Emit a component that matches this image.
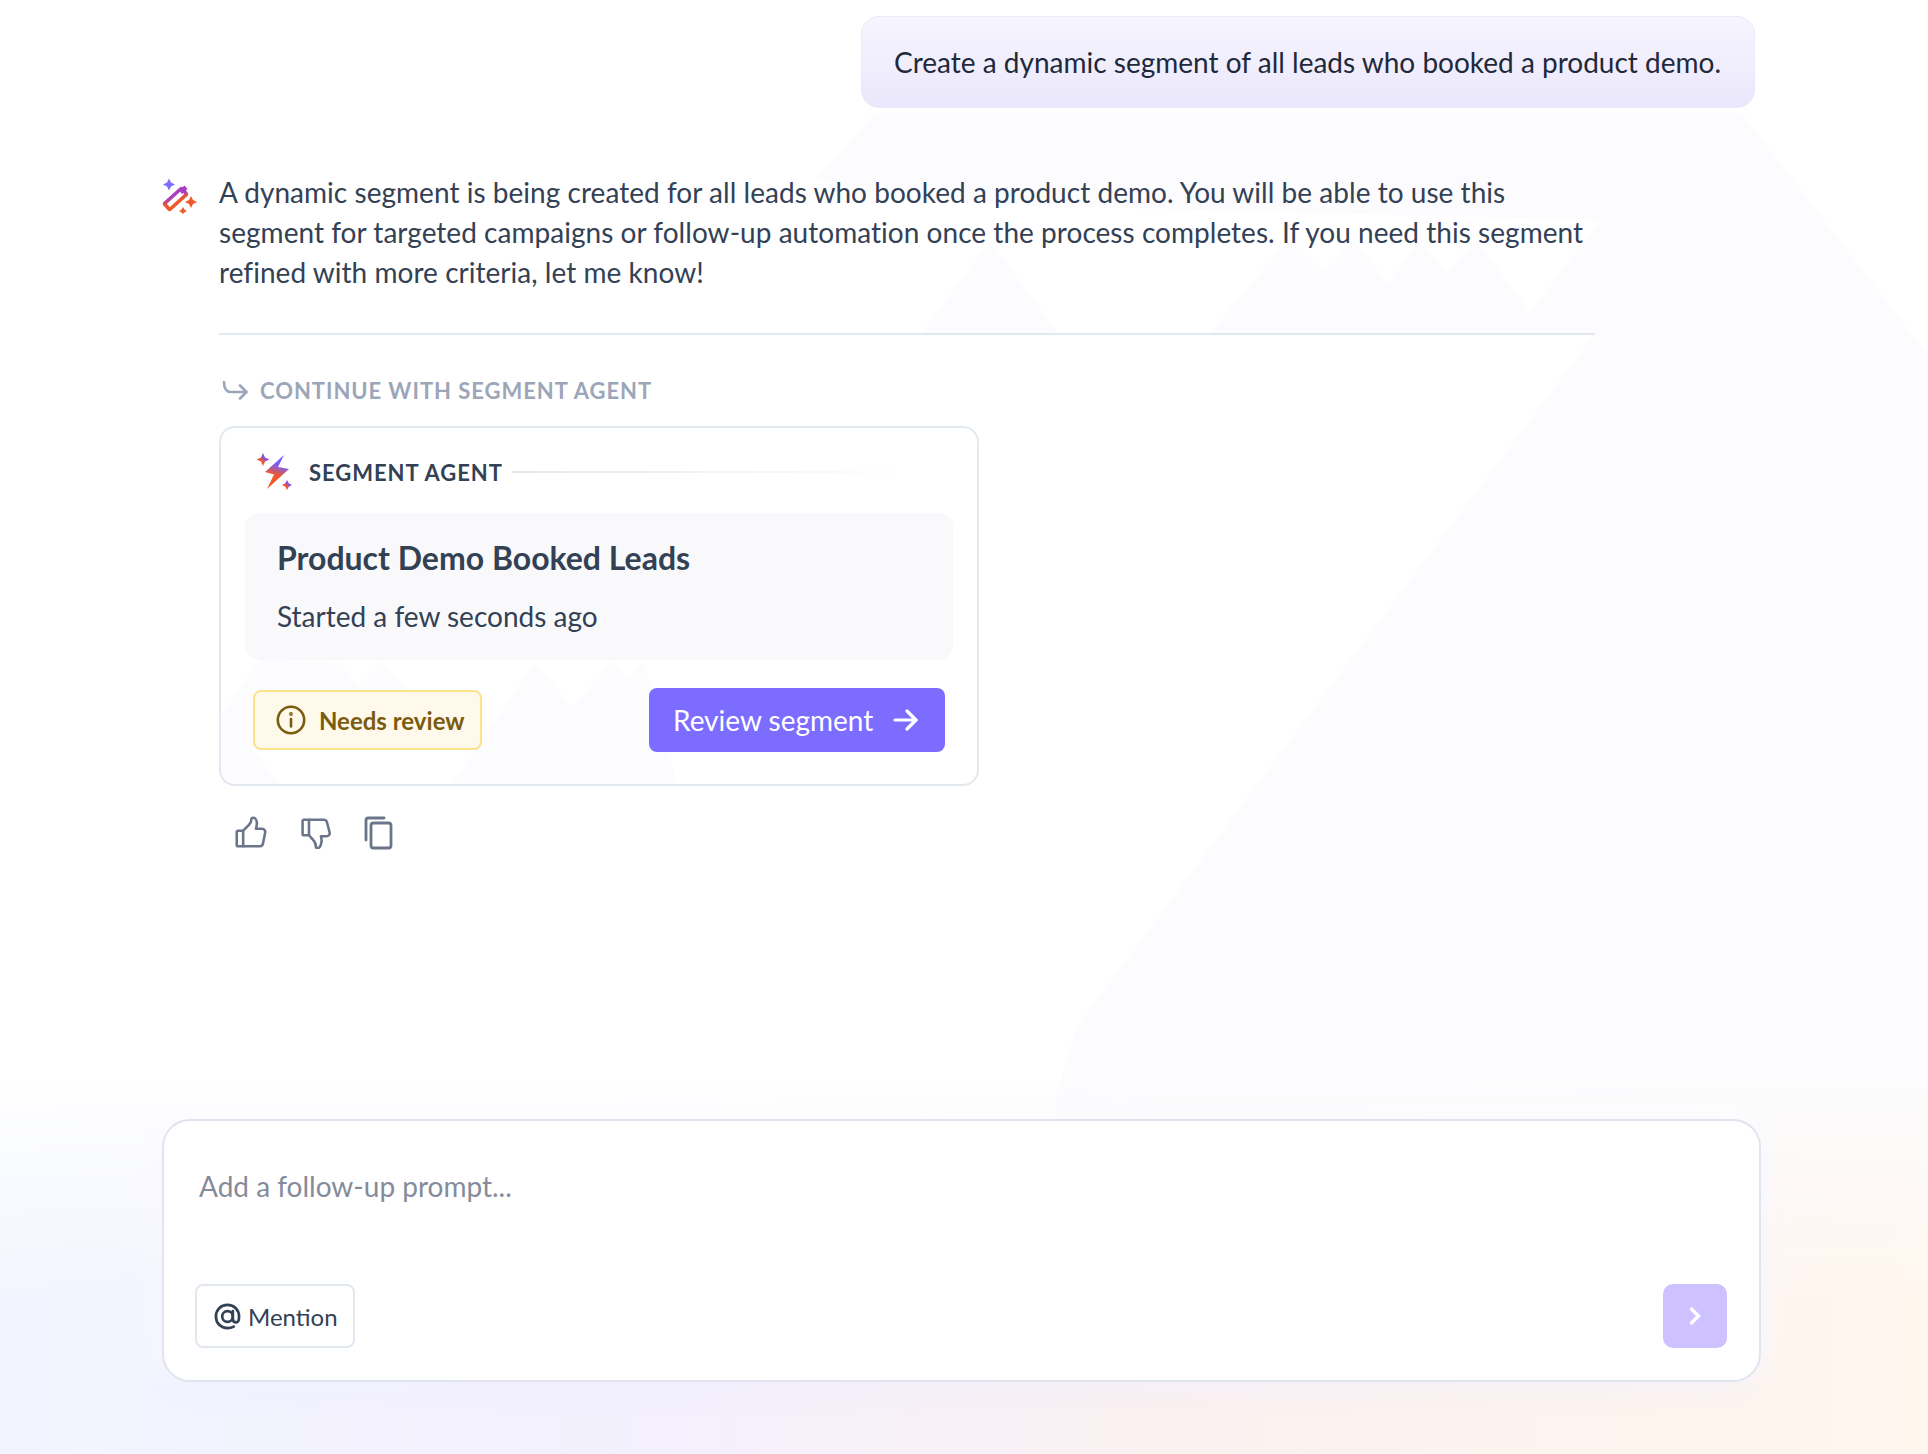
<style>
  :global(body) { margin: 0; background: #fff; }

  .page {
    position: relative;
    height: 1454px;
    overflow: hidden;
    font-family: Lato, "Open Sans", sans-serif;
    color: #334155;
  }

  /* --- decorative background --- */
  .mountains { position: absolute; left: 0; top: 0; }
  .glow {
    position: absolute;
    left: 0; right: 0; bottom: 0;
    height: 380px;
    background: linear-gradient(to right, #f2f5ff 0%, #f4f0fd 35%, #fbf1f0 62%, #fff6ee 100%);
    -webkit-mask-image: linear-gradient(to bottom, transparent 0%, #000 60%);
    mask-image: linear-gradient(to bottom, transparent 0%, #000 60%);
  }

  .chat {
    position: relative;
    display: flex;
    flex-direction: column;
    height: 100%;
    box-sizing: border-box;
    margin-left: 162px;
    width: 1599px;
    padding-top: 16px;
  }

  /* --- user bubble --- */
  .bubble {
    align-self: flex-end;
    margin-right: 6px;
    box-sizing: border-box;
    height: 92px;
    display: flex;
    align-items: center;
    padding: 0 33px 0 32px;
    font-size: 28px;
    color: #1e293b;
    border: 1px solid #ece8fd;
    border-radius: 18px;
    background: linear-gradient(to bottom, #f7f5fe, #ebe7fc);
  }

  /* --- assistant reply --- */
  .reply { display: flex; gap: 22px; margin-top: 64px; }
  .reply-icon { flex: none; margin-top: 6px; }
  .reply-body { width: 1376px; }
  .message {
    margin: 0;
    font-size: 28px;
    line-height: 40px;
    letter-spacing: 0.035px;
    padding-bottom: 41px;
    border-bottom: 2px solid #e2e8f0;
  }

  .continue {
    display: flex;
    align-items: center;
    gap: 12px;
    height: 32px;
    margin: 39px 0 20px;
    padding-left: 3px;
    font-size: 22px;
    font-weight: 700;
    letter-spacing: 0.95px;
    color: #9ca6b9;
  }

  .card {
    box-sizing: border-box;
    width: 760px;
    height: 360px;
    padding: 24px 24px 0;
    border: 2px solid #e2e8f0;
    border-radius: 16px;
  }
  .card-head { display: flex; align-items: center; height: 40px; padding-left: 11px; }
  .card-head svg { margin-right: 15px; }
  .card-head span { font-size: 22px; font-weight: 700; letter-spacing: 0.95px; white-space: nowrap; }
  .fade-line {
    flex: 1;
    height: 2px;
    margin-left: 9px;
    background: linear-gradient(to right, #e2e8f0, rgba(226, 232, 240, 0) 92%);
  }
  .summary {
    box-sizing: border-box;
    height: 147px;
    margin-top: 21px;
    padding: 25px 32px 0;
    background: #f9f9fc;
    border-radius: 14px;
  }
  .summary h3 { margin: 0; font-size: 32px; line-height: 40px; font-weight: 700; }
  .summary p { margin: 18px 0 0; font-size: 28px; line-height: 40px; }

  .card-foot {
    display: flex;
    align-items: center;
    justify-content: space-between;
    margin: 28px 8px 0;
  }
  .badge {
    box-sizing: border-box;
    display: flex;
    align-items: center;
    gap: 13px;
    width: 229px;
    height: 60px;
    padding-left: 21px;
    background: #fff9ec;
    border: 2px solid #fde28c;
    border-radius: 8px;
    font-size: 24px;
    font-weight: 700;
    color: #7a5c10;
  }
  .review {
    display: flex;
    align-items: center;
    gap: 20px;
    box-sizing: border-box;
    width: 296px;
    height: 64px;
    padding-left: 24px;
    background: #7c6cff;
    border: 0;
    border-radius: 8px;
    font: inherit;
    font-size: 28px;
    color: #fff;
  }

  .actions { display: flex; align-items: flex-start; gap: 31px; margin-top: 30px; padding-left: 15px; }
  .actions svg { display: block; }
  .actions .copy { margin-left: 2px; }

  /* --- prompt box --- */
  .prompt {
    position: absolute;
    left: 0; right: 0;
    top: 1119px;
    box-sizing: border-box;
    height: 263px;
    display: flex;
    flex-direction: column;
    justify-content: space-between;
    padding: 45px 32px 32px 31px;
    background: #fff;
    border: 2px solid #e0e4ef;
    border-radius: 28px;
    box-shadow: 0 8px 28px rgba(124, 108, 255, 0.07), 0 -4px 24px 10px rgba(255, 255, 255, 0.7);
  }
  .placeholder { padding-left: 4px; font-size: 28px; line-height: 40px; color: #858b9b; }
  .prompt-foot { display: flex; justify-content: space-between; }
  .mention {
    display: flex;
    align-items: center;
    gap: 7px;
    box-sizing: border-box;
    width: 160px;
    height: 64px;
    padding-left: 17px;
    background: #fff;
    border: 2px solid #e2e8f0;
    border-radius: 8px;
    font: inherit;
    font-size: 24px;
    color: #334155;
  }
  .send {
    display: flex;
    align-items: center;
    justify-content: center;
    width: 64px;
    height: 64px;
    background: #cdc2ff;
    border: 0;
    border-radius: 10px;
  }
</style>

<div class="page">
  <!-- faint backdrop shapes -->
  <svg class="mountains" width="1928" height="1454" viewBox="0 0 1928 1454" aria-hidden="true">
    <g fill="#fcfcfe">
      <path d="M875 113H1742L1928 355V1454H1055V1100L1077 1026L1595 333H1210L1290 238L1325 272L1354 240L1388 284L1419 240L1447 272L1476 240L1530 312L1600 220L1000 205L815 180Z" />
      <path d="M922 333L990 240L1058 333Z" />
      <path d="M221 715L260 660L340 662L358 685L383 662L420 705L300 720L253 750L280 784H221Z" />
      <path d="M452 784L535 662L572 707L612 662L628 680L643 662L677 784Z" />
    </g>
  </svg>
  <div class="glow"></div>

  <div class="chat">
    <div class="bubble">Create a dynamic segment of all leads who booked a product demo.</div>

    <div class="reply">
      <svg class="reply-icon" width="35" height="36" viewBox="0 0 35 36" aria-hidden="true">
        <defs>
          <linearGradient id="wand" x1="0" y1="1" x2="1" y2="0">
            <stop offset="0.35" stop-color="#f0592b" />
            <stop offset="0.7" stop-color="#a83fc0" />
          </linearGradient>
        </defs>
        <path d="M7 0.5L9 4.500L13 6.500L9 8.500L7 12.500L5 8.500L1 6.500L5 4.500Z" fill="#7c6cff" />
        <rect x="-11.500" y="-4" width="23" height="8" rx="1" transform="translate(13.500 21) rotate(-42)" fill="none" stroke="url(#wand)" stroke-width="3.600" />
        <path d="M17 12.500L22.500 7.500L25.500 11L20 16Z" fill="#a83fc0" />
        <path d="M29 18L31 22L35 24L31 26L29 30L27 26L23 24L27 22Z" fill="#f0592b" />
        <path d="M21 29L22.400 31.600L25 33L22.400 34.400L21 36L19.600 34.400L17 33L19.600 31.600Z" fill="#f0592b" />
      </svg>

      <div class="reply-body">
        <p class="message">A dynamic segment is being created for all leads who booked a product demo. You will be able to use this segment for targeted campaigns or follow-up automation once the process completes. If you need this segment refined with more criteria, let me know!</p>

        <div class="continue">
          <svg width="26" height="22" viewBox="0 0 26 22" fill="none" stroke="#9ca6b9" stroke-width="2.600" stroke-linecap="round" stroke-linejoin="round" aria-hidden="true">
            <path d="M2 3C2 10 4 13 9 13H24" />
            <path d="M18 6.500L24.500 13L18 19.500" />
          </svg>
          CONTINUE WITH SEGMENT AGENT
        </div>

        <div class="card">
          <div class="card-head">
            <svg width="38" height="40" viewBox="0 0 38 40" aria-hidden="true">
              <defs>
                <linearGradient id="bolt" x1="0.6" y1="0" x2="0.4" y2="1">
                  <stop offset="0.3" stop-color="#7c5cf5" />
                  <stop offset="0.6" stop-color="#f0592b" />
                </linearGradient>
                <linearGradient id="spark" x1="1" y1="0" x2="0" y2="1">
                  <stop offset="0.4" stop-color="#8a4fe0" />
                  <stop offset="0.6" stop-color="#f0592b" />
                </linearGradient>
              </defs>
              <path d="M28 3L9 20L18 22.500L11 37L33 17L22 15Z" fill="url(#bolt)" />
              <path d="M7 1L9 5.500L13.500 7.500L9 9.500L7 14L5 9.500L0.500 7.500L5 5.500Z" fill="url(#spark)" />
              <path d="M31 28L32.700 31.300L36 33L32.700 34.700L31 38L29.300 34.700L26 33L29.300 31.300Z" fill="url(#spark)" />
            </svg>
            <span>SEGMENT AGENT</span>
            <div class="fade-line"></div>
          </div>

          <div class="summary">
            <h3>Product Demo Booked Leads</h3>
            <p>Started a few seconds ago</p>
          </div>

          <div class="card-foot">
            <div class="badge">
              <svg width="30" height="30" viewBox="0 0 30 30" fill="none" stroke="#7a5c10" stroke-width="2.600" stroke-linecap="round" aria-hidden="true">
                <circle cx="15" cy="15" r="13.200" />
                <path d="M15 14V21.500" />
                <circle cx="15" cy="9" r="0.600" fill="#7a5c10" />
              </svg>
              Needs review
            </div>
            <button class="review">
              Review segment
              <svg width="26" height="24" viewBox="0 0 26 24" fill="none" stroke="#fff" stroke-width="3.200" stroke-linecap="round" stroke-linejoin="round" aria-hidden="true">
                <path d="M2 12H23" />
                <path d="M14 3L23 12L14 21" />
              </svg>
            </button>
          </div>
        </div>

        <div class="actions">
          <svg width="33" height="33" viewBox="0 0 36 36" fill="none" stroke="#6b7589" stroke-width="2.800" stroke-linejoin="round" stroke-linecap="round" aria-hidden="true">
            <path d="M10 16H4.500A1.500 1.500 0 0 0 3 17.500V31.500A1.500 1.500 0 0 0 4.500 33H10Z" />
            <path d="M10 16L16 10C18 8 19 6 19 3.500C19 2.500 20 2 21 2C23.500 2 25 5 25 8C25 10 24.500 12 24 14H30.500C33 14 34.500 16 34 18L31.500 30.500C31 32 30 33 28.500 33H10" />
          </svg>
          <svg width="33" height="33" viewBox="0 0 36 36" fill="none" stroke="#6b7589" stroke-width="2.800" stroke-linejoin="round" stroke-linecap="round" aria-hidden="true">
            <path d="M12 21H6.500A1.500 1.500 0 0 1 5 19.500V5.500A1.500 1.500 0 0 1 6.500 4H12Z" />
            <path d="M12 4H28C30 4 31 5 31.500 6.500L34.500 18C35 20 33.500 22 31 22H25C25.500 24 26 27 25.500 29C25 32 23.500 35 21.500 35C20.500 35 19.500 34.500 19.500 33.500C19.500 30 18.500 28 16.500 26L12 21" />
          </svg>
          <svg class="copy" width="30" height="34" viewBox="0 0 30 34" fill="none" stroke="#6b7589" stroke-width="2.800" stroke-linejoin="round" stroke-linecap="round" aria-hidden="true">
            <rect x="7" y="7" width="20" height="25" rx="2.500" />
            <path d="M20 2H4A2 2 0 0 0 2 4V24" />
          </svg>
        </div>
      </div>
    </div>

    <div class="prompt">
      <div class="placeholder">Add a follow-up prompt...</div>
      <div class="prompt-foot">
        <button class="mention">
          <svg width="27" height="27" viewBox="0 0 28 28" fill="none" stroke="#334155" stroke-width="2.800" stroke-linecap="round" aria-hidden="true">
            <circle cx="14" cy="14" r="5.500" />
            <path d="M19.500 8.500V16C19.500 18.500 21 20 23 20C25.500 20 26 17 26 14C26 7 21 2 14 2C7 2 2 7 2 14C2 21 7 26 14 26C16.500 26 18.500 25.500 20.500 24.500" />
          </svg>
          Mention
        </button>
        <button class="send" aria-label="Send">
          <svg width="14" height="20" viewBox="0 0 14 20" fill="none" stroke="#fff" stroke-width="3.400" aria-hidden="true">
            <path d="M2.500 2L10.500 10L2.500 18" />
          </svg>
        </button>
      </div>
    </div>
  </div>
</div>
